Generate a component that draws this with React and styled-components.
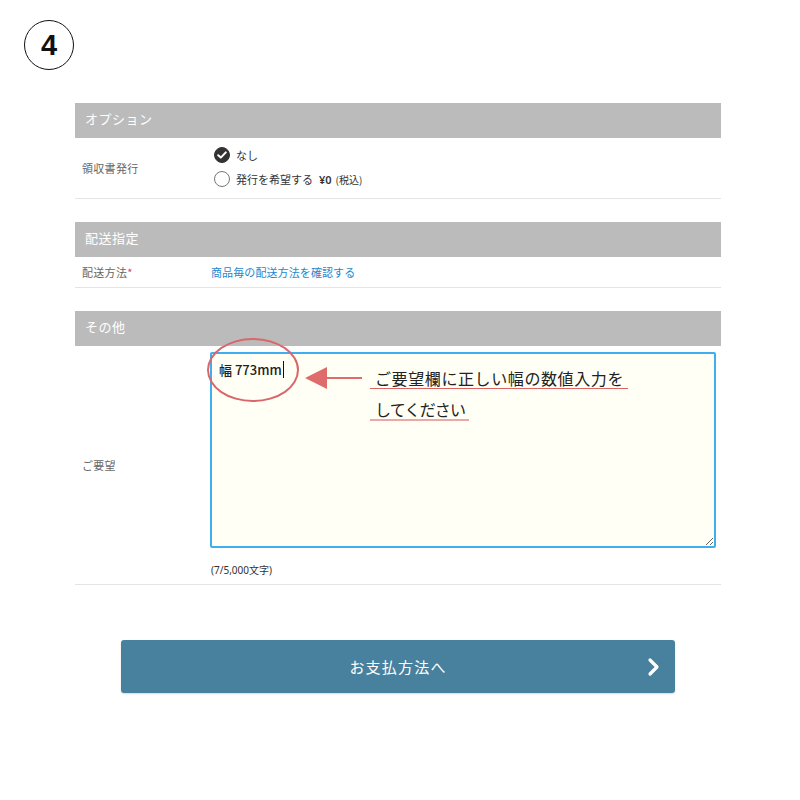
import React from "react";
import styled, { createGlobalStyle } from "styled-components";

const Global = createGlobalStyle`
  html, body { margin: 0; padding: 0; background: #fff; }
  body { font-family: "Noto Sans CJK JP", "Noto Sans", sans-serif; color: #333; }
  * { box-sizing: border-box; }
`;

const Page = styled.div`
  width: 800px;
  height: 800px;
  position: relative;
  background: #fff;
`;

const Top = styled.div`
  height: 103px;
  padding: 20px 0 0 24px;
`;

const StepBadge = styled.div`
  width: 50px;
  height: 50px;
  border: 1.5px solid #111;
  border-radius: 50%;
  display: flex;
  align-items: center;
  justify-content: center;
  font-family: "Liberation Sans", Arial, sans-serif;
  font-weight: 700;
  font-size: 29px;
  color: #111;
`;

const Main = styled.div`
  width: 646px;
  margin-left: 75px;
  display: flex;
  flex-direction: column;
  gap: 23px;
`;

const Section = styled.section`
  display: flex;
  flex-direction: column;
`;

const Header = styled.div`
  height: 35px;
  background: #bbbbbb;
  color: #fff;
  font-size: 13px;
  line-height: 32px;
  padding-left: 10px;
  letter-spacing: 0.5px;
`;

const Row = styled.div`
  display: grid;
  grid-template-columns: 135px 1fr;
  align-items: center;
  min-height: ${(p) => p.$h}px;
  border-bottom: 1px solid #e4e4e4;
`;

const Label = styled.div`
  font-size: 11px;
  color: #666;
  padding-left: 7px;
  letter-spacing: 0.3px;
`;

const Req = styled.span`
  color: #d9425a;
`;

const RadioGroup = styled.div`
  display: flex;
  flex-direction: column;
  gap: 8px;
  padding-left: 4px;
  margin-top: -2px;
`;

const RadioItem = styled.label`
  display: flex;
  align-items: center;
  gap: 6px;
  font-size: 11px;
  color: #333;
  height: 16px;
`;

const RadioMark = styled.span`
  width: 16px;
  height: 16px;
  border-radius: 50%;
  flex: none;
  display: flex;
  align-items: center;
  justify-content: center;
  background: ${(p) => (p.$checked ? "#333" : "#fff")};
  border: 1px solid ${(p) => (p.$checked ? "#333" : "#777")};
`;

const Price = styled.span`
  font-weight: 600;
  margin-left: 0;
  font-family: "Noto Sans", "Noto Sans CJK JP", sans-serif;
`;

const Small = styled.span`
  font-size: 10px;
  margin-left: -2px;
`;

const Link = styled.a`
  font-size: 11px;
  color: #1e88cc;
  text-decoration: none;
  padding-left: 1px;
  letter-spacing: 0.1px;
`;

const ValueCell = styled.div`
  position: relative;
  padding: 6px 6px 0 0;
  display: flex;
  flex-direction: column;
`;

const TextArea = styled.textarea`
  width: 506px;
  height: 196px;
  border: 2px solid #3eaef0;
  border-radius: 2px;
  background: #fffff5;
  padding: 6px 7px;
  font-family: "Noto Sans CJK JP", "Noto Sans", sans-serif;
  font-size: 13px;
  font-weight: 500;
  color: #222;
  outline: none;
  resize: both;
  display: block;
  margin: 0;
`;

const Caret = styled.span`
  position: absolute;
  left: 73px;
  top: 15px;
  width: 1px;
  height: 17px;
  background: #111;
`;

const Counter = styled.div`
  height: 36px;
  padding-top: 15px;
  line-height: 14px;
  font-size: 10px;
  color: #333;
  padding-left: 1px;
  font-family: "Noto Sans", "Noto Sans CJK JP", sans-serif;
`;

const Ellipse = styled.div`
  position: absolute;
  left: -3px;
  top: -8px;
  width: 92px;
  height: 64px;
  border: 2px solid #d9666a;
  border-radius: 50%;
  pointer-events: none;
`;

const Arrow = styled.svg`
  position: absolute;
  left: 95px;
  top: 20px;
  overflow: visible;
`;

const Note = styled.div`
  position: absolute;
  left: 160px;
  top: 22px;
  display: flex;
  flex-direction: column;
  gap: 10px;
  align-items: flex-start;
`;

const NoteLine = styled.span`
  display: block;
  font-size: 16px;
  line-height: 20px;
  letter-spacing: ${(p) => (p.$light ? "-0.8px" : "0.6px")};
  color: #222;
  padding: 0 4px 0 5px;
  border-bottom: ${(p) => (p.$light ? "2px solid #eba8a8" : "1.5px solid #dd6464")};
`;

const Footer = styled.div`
  display: flex;
  padding: 55px 0 0 121px;
`;

const NextButton = styled.button`
  width: 554px;
  height: 53px;
  background: #47819e;
  border: none;
  border-radius: 3px;
  box-shadow: 0 1px 2px rgba(0, 0, 0, 0.15);
  color: #fff;
  font-family: "Noto Sans CJK JP", "Noto Sans", sans-serif;
  font-size: 15px;
  letter-spacing: 1.2px;
  position: relative;
  display: flex;
  align-items: center;
  justify-content: center;
  cursor: pointer;
`;

const Chevron = styled.svg`
  position: absolute;
  right: 14px;
  top: 50%;
  transform: translateY(-50%);
`;

export default function App() {
  return (
    <Page>
      <Global />
      <Top>
        <StepBadge>4</StepBadge>
      </Top>
      <Main>
        <Section>
          <Header>オプション</Header>
          <Row $h={61}>
            <Label>領収書発行</Label>
            <RadioGroup>
              <RadioItem>
                <RadioMark $checked>
                  <svg width="10" height="8" viewBox="0 0 10 8">
                    <path d="M1.2 4.2 L3.8 6.6 L8.8 1.4" fill="none" stroke="#fff" strokeWidth="2" strokeLinecap="round" strokeLinejoin="round" />
                  </svg>
                </RadioMark>
                なし
              </RadioItem>
              <RadioItem>
                <RadioMark />
                発行を希望する<Price>¥0</Price>
                <Small>(税込)</Small>
              </RadioItem>
            </RadioGroup>
          </Row>
        </Section>

        <Section>
          <Header>配送指定</Header>
          <Row $h={31}>
            <Label>
              配送方法<Req>*</Req>
            </Label>
            <Link href="#">商品毎の配送方法を確認する</Link>
          </Row>
        </Section>

        <Section>
          <Header>その他</Header>
          <Row $h={239}>
            <Label>ご要望</Label>
            <ValueCell>
              <TextArea defaultValue="幅 773mm" />
              <Caret />
              <Counter>(7/5,000文字)</Counter>
              <Ellipse />
              <Arrow width="60" height="24" viewBox="0 0 60 24">
                <polygon points="0,12 22,1 22,23" fill="#df6b6b" />
                <line x1="20" y1="12" x2="57" y2="12" stroke="#df6b6b" strokeWidth="2" />
              </Arrow>
              <Note>
                <NoteLine>ご要望欄に正しい幅の数値入力を</NoteLine>
                <NoteLine $light>してください</NoteLine>
              </Note>
            </ValueCell>
          </Row>
        </Section>
      </Main>
      <Footer>
        <NextButton>
          お支払方法へ
          <Chevron width="14" height="20" viewBox="0 0 14 20">
            <path d="M3 3 L10 10 L3 17" fill="none" stroke="#fff" strokeWidth="3.2" strokeLinecap="round" strokeLinejoin="round" />
          </Chevron>
        </NextButton>
      </Footer>
    </Page>
  );
}
